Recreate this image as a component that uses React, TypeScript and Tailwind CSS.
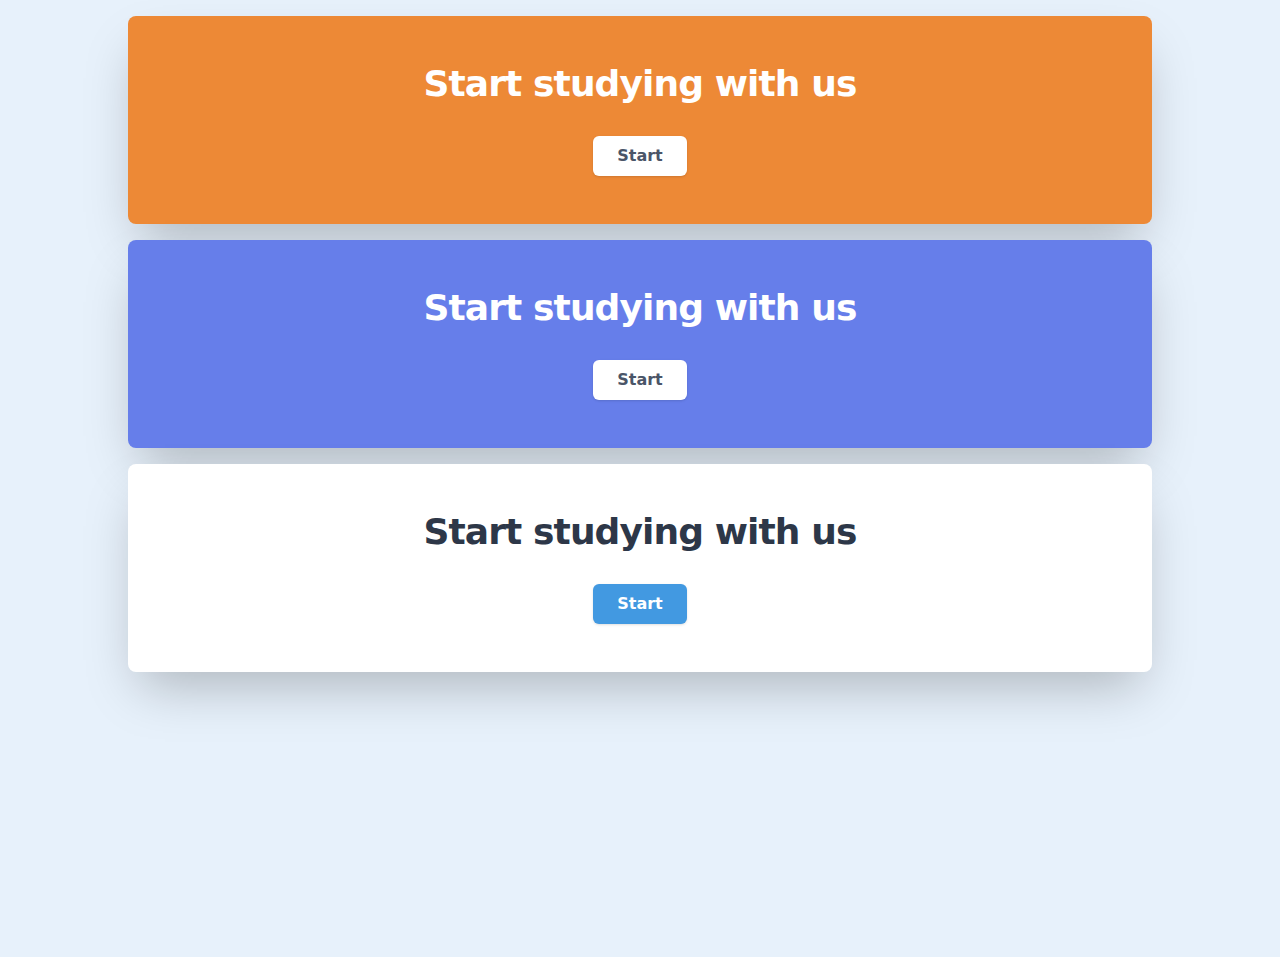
const CARDS = [
  { bg: "bg-[#ed8936]", title: "text-white", btn: "bg-white text-[#4a5568]" },
  { bg: "bg-[#667eea]", title: "text-white", btn: "bg-white text-[#4a5568]" },
  { bg: "bg-white", title: "text-[#2d3748]", btn: "bg-[#4299e1] text-white" },
];

export default function App() {
  return (
    <div className="min-h-screen bg-[#e7f1fb] py-4 font-['DejaVu_Sans',sans-serif]">
      <div className="max-w-5xl mx-auto flex flex-col gap-4">
        {CARDS.map((card, i) => (
          <div
            key={i}
            className={`${card.bg} rounded-lg shadow-2xl p-12 flex flex-col items-center`}
          >
            <h1 className={`text-4xl font-bold tracking-tight ${card.title}`}>
              Start studying with us
            </h1>
            <button
              className={`mt-8 px-6 py-2 rounded-md text-base font-bold shadow ${card.btn}`}
            >
              Start
            </button>
          </div>
        ))}
      </div>
    </div>
  );
}
